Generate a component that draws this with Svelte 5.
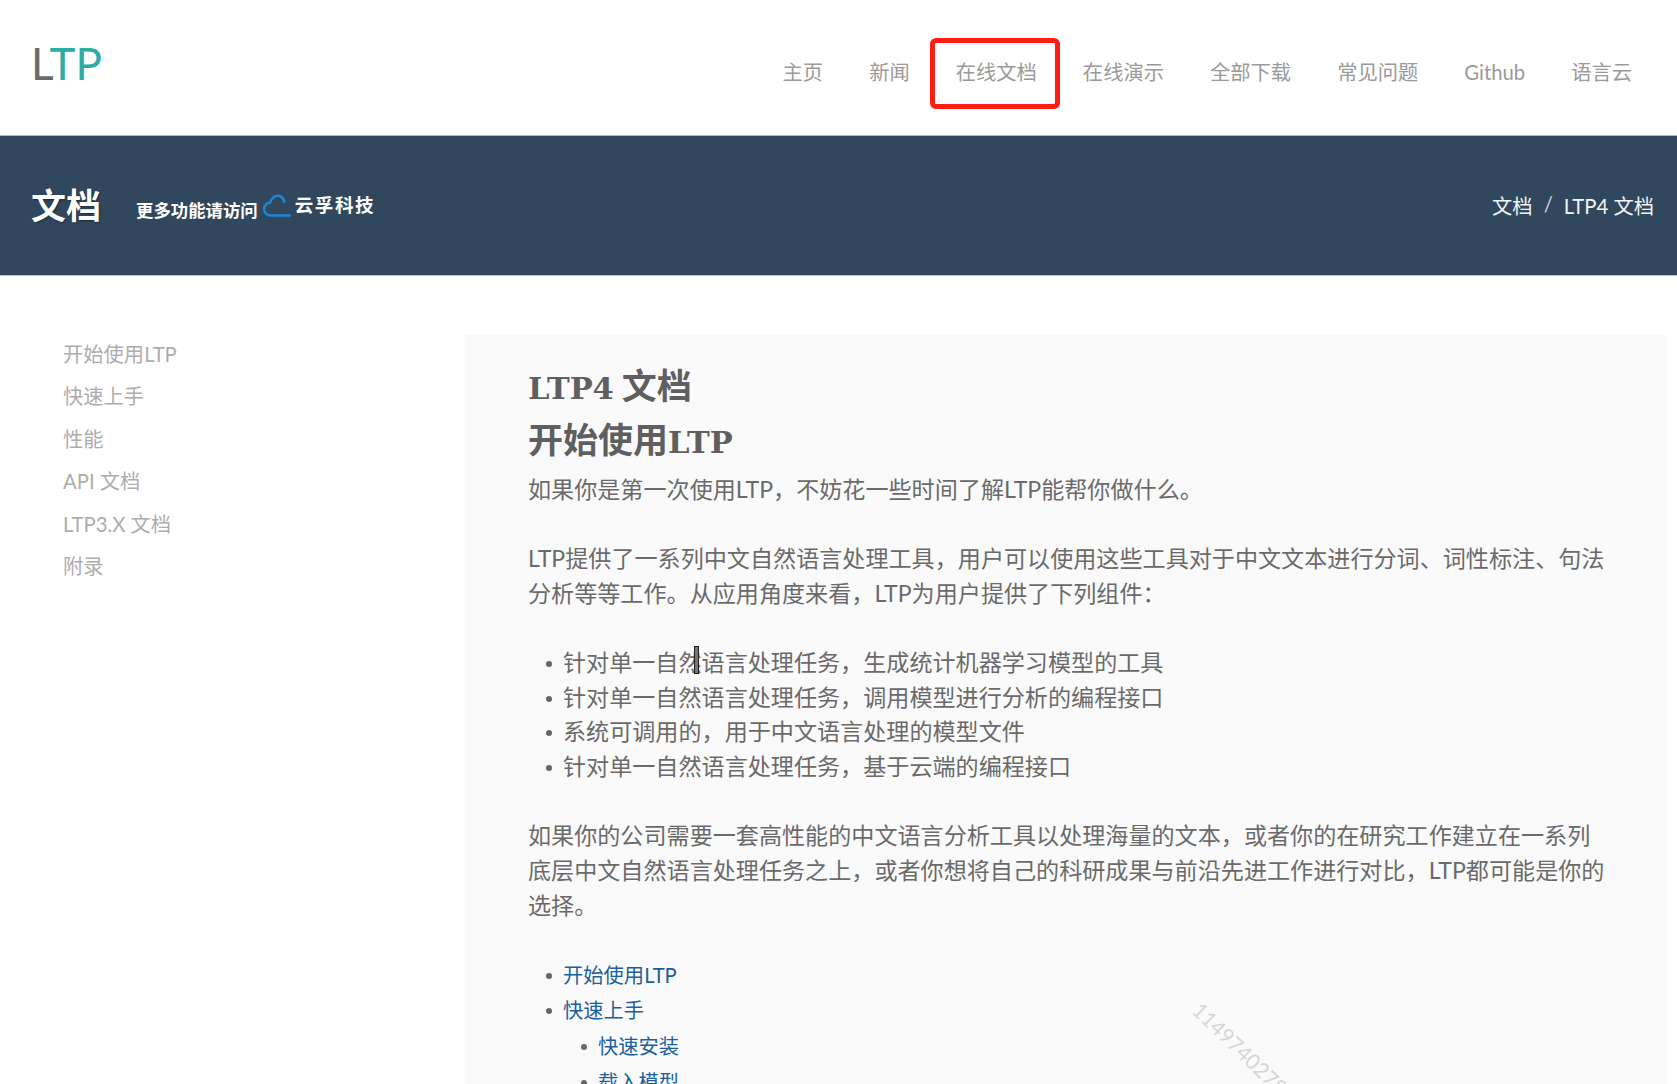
<script>
	const navItems = ['主页', '新闻', '在线文档', '在线演示', '全部下载', '常见问题', 'Github', '语言云'];
	const sideItems = ['开始使用LTP', '快速上手', '性能', 'API 文档', 'LTP3.X 文档', '附录'];
	const components = [
		'针对单一自然语言处理任务，生成统计机器学习模型的工具',
		'针对单一自然语言处理任务，调用模型进行分析的编程接口',
		'系统可调用的，用于中文语言处理的模型文件',
		'针对单一自然语言处理任务，基于云端的编程接口'
	];
</script>

<div class="page">
	<header class="topbar">
		<div class="logo">L<span>TP</span></div>
		<nav class="nav">
			{#each navItems as item}
				<a class="nav-link" class:marked={item === '在线文档'} href="#top">{item}</a>
			{/each}
		</nav>
	</header>

	<section class="banner">
		<div class="banner-left">
			<h1 class="banner-title">文档</h1>
			<span class="promo">更多功能请访问</span>
			<svg class="cloud" viewBox="0 0 30 24" width="30" height="24" aria-hidden="true">
				<path d="M28 21.5H9C5 21.5 2 18.5 2 15C2 11.5 4.8 8.8 8 8.8C9.5 4.5 12.5 1.8 15.7 1.8C19 1.8 21.5 4.5 22.3 8" fill="none" stroke="#1f86d8" stroke-width="2.4" stroke-linecap="round" />
			</svg>
			<span class="brand">云孚科技</span>
		</div>
		<div class="crumbs">
			<span>文档</span>
			<span class="sep">/</span>
			<span>LTP4 文档</span>
		</div>
	</section>

	<main class="body">
		<aside class="side">
			{#each sideItems as item}
				<a class="side-link" href="#top">{item}</a>
			{/each}
		</aside>

		<article class="doc">
			<h1><span class="lat">LTP4</span> 文档</h1>
			<h2>开始使用<span class="lat">LTP</span></h2>
			<p>如果你是第一次使用LTP，不妨花一些时间了解LTP能帮你做什么。</p>
			<p>LTP提供了一系列中文自然语言处理工具，用户可以使用这些工具对于中文文本进行分词、词性标注、句法分析等等工作。从应用角度来看，LTP为用户提供了下列组件：</p>
			<ul>
				{#each components as item}
					<li>{item}</li>
				{/each}
			</ul>
			<p>如果你的公司需要一套高性能的中文语言分析工具以处理海量的文本，或者你的在研究工作建立在一系列底层中文自然语言处理任务之上，或者你想将自己的科研成果与前沿先进工作进行对比，LTP都可能是你的选择。</p>
			<ul class="toc">
				<li><a href="#top">开始使用LTP</a></li>
				<li>
					<a href="#top">快速上手</a>
					<ul>
						<li><a href="#top">快速安装</a></li>
						<li><a href="#top">载入模型</a></li>
					</ul>
				</li>
			</ul>

			<!-- video cursor and watermark sit over the text -->
			<div class="cursor"></div>
			<div class="watermark">1149740278</div>
		</article>
	</main>
</div>

<style>
	:global(body) {
		margin: 0;
		background: #fff;
	}

	.page {
		height: 1084px;
		overflow: hidden;
		font-family: Lato, 'Noto Sans CJK SC', sans-serif;
		color: #666;
	}

	a {
		text-decoration: none;
	}

	/* ===== TOP BAR ===== */
	.topbar {
		height: 135px;
		box-sizing: border-box;
		display: flex;
		justify-content: space-between;
		align-items: center;
		padding: 0 22px 0 31px;
	}

	.logo {
		font-size: 44px;
		font-weight: 400;
		line-height: 1;
		color: #6a6a6a;
		margin-top: -10px;
	}

	.logo span {
		color: #2dacA3;
	}

	.nav {
		display: flex;
		margin-top: 8px;
	}

	.nav-link {
		position: relative;
		padding: 0 23px;
		font-size: 20.3px;
		line-height: 30px;
		color: #9a9a9a;
	}

	.nav-link.marked::after {
		content: '';
		position: absolute;
		left: -3px;
		right: 0;
		top: -19px;
		height: 71px;
		box-sizing: border-box;
		border: 5px solid #ff1c14;
		border-radius: 6px;
	}

	/* ===== BANNER ===== */
	.banner {
		height: 141px;
		box-sizing: border-box;
		display: flex;
		justify-content: space-between;
		align-items: center;
		padding: 0 23px 0 31px;
		background: #30475e;
		border-top: 1px solid #a9b6c4;
		border-bottom: 1px solid #b9c6d3;
		color: #fff;
	}

	.banner-left {
		display: flex;
		align-items: center;
	}

	.banner-title {
		margin: 0 35px 0 0;
		font-size: 35px;
		font-weight: 700;
		line-height: 1;
		text-shadow: 1px 1px 2px rgba(0, 0, 0, 0.4);
	}

	.promo {
		margin-top: 8px;
		font-size: 17.4px;
		font-weight: 700;
	}

	.cloud {
		margin: 0 3px 0 4px;
	}

	.brand {
		font-size: 18.5px;
		font-weight: 700;
		letter-spacing: 1.6px;
		margin-top: -3px;
	}

	.crumbs {
		display: flex;
		gap: 11px;
		font-size: 20.3px;
		color: #f2f4f6;
		margin-top: -2px;
	}

	.sep {
		color: #c9d1d9;
		margin-top: 2px;
	}

	/* ===== BODY ===== */
	.body {
		display: grid;
		grid-template-columns: 465px 1fr;
	}

	.side {
		display: flex;
		flex-direction: column;
		padding: 57px 0 0 63px;
	}

	.side-link {
		font-size: 20.3px;
		line-height: 42.4px;
		color: #adadad;
	}

	.doc {
		position: relative;
		margin: 59px 10px 0 0;
		padding: 22px 58px 0 63px;
		background: #fafafa;
		font-size: 23.1px;
		line-height: 34.65px;
		color: #6a6a6a;
	}

	.doc h1,
	.doc h2 {
		margin: 0;
		font-family: 'Noto Sans CJK SC', sans-serif;
		font-size: 35px;
		font-weight: 700;
		line-height: 53.5px;
		color: #5f5f5f;
	}

	.lat {
		font-family: 'DejaVu Serif', serif;
		font-size: 30.5px;
		line-height: 1;
	}

	.doc h2 {
		margin-bottom: 7.7px;
	}

	.doc p {
		margin: 0 0 34.65px;
	}

	.doc ul {
		margin: 0 0 34.65px;
		padding-left: 35px;
		list-style: none;
	}

	.doc ul ul {
		margin: 0;
	}

	.doc li {
		position: relative;
	}

	.doc li::before {
		content: '';
		position: absolute;
		left: -17px;
		top: 16px;
		width: 6px;
		height: 6px;
		border-radius: 50%;
		background: #666;
	}

	.toc a {
		font-size: 20.3px;
		color: #1d5f9c;
	}

	.cursor {
		position: absolute;
		left: 229px;
		top: 311px;
		width: 5px;
		height: 28px;
		box-sizing: border-box;
		border: 1px solid #1f1f1f;
		background: #777;
	}

	.watermark {
		position: absolute;
		left: 743px;
		top: 659px;
		font-size: 21px;
		color: #d6d6d6;
		transform: rotate(44deg);
		transform-origin: left top;
		white-space: nowrap;
	}
</style>
